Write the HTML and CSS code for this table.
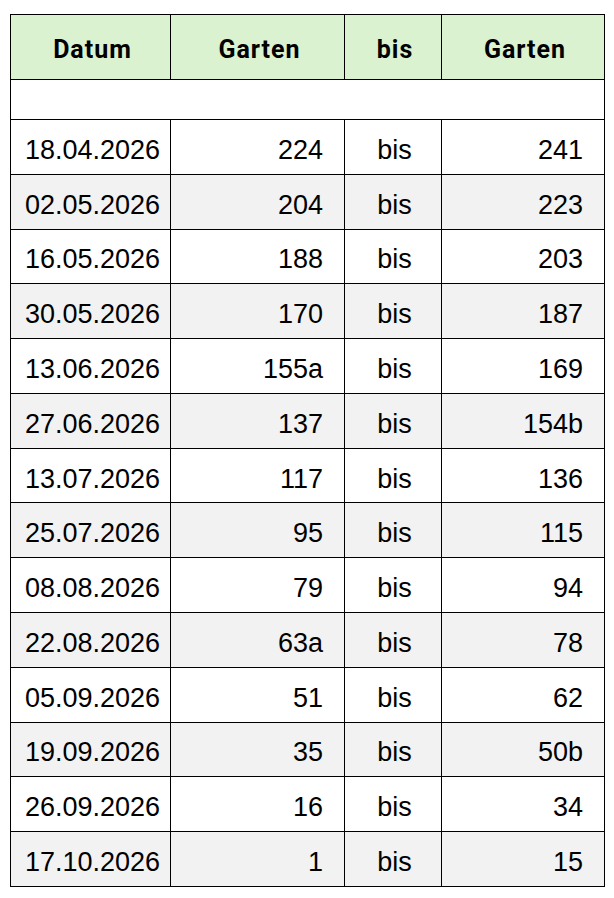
FILE: index.html
```html
<!DOCTYPE html>
<html lang="de">
<head>
<meta charset="utf-8">
<title>Gartenplan</title>
<link rel="stylesheet" href="styles.css">
</head>
<body>
<div class="sheet">
  <div class="row head">
    <div class="c">Datum</div><div class="c">Garten</div><div class="c">bis</div><div class="c">Garten</div>
  </div>
  <div class="row empty">
    <div class="c span"></div>
  </div>
  <div class="row"><div class="c d">18.04.2026</div><div class="c n">224</div><div class="c b">bis</div><div class="c n">241</div></div>
  <div class="row alt"><div class="c d">02.05.2026</div><div class="c n">204</div><div class="c b">bis</div><div class="c n">223</div></div>
  <div class="row"><div class="c d">16.05.2026</div><div class="c n">188</div><div class="c b">bis</div><div class="c n">203</div></div>
  <div class="row alt"><div class="c d">30.05.2026</div><div class="c n">170</div><div class="c b">bis</div><div class="c n">187</div></div>
  <div class="row"><div class="c d">13.06.2026</div><div class="c n">155a</div><div class="c b">bis</div><div class="c n">169</div></div>
  <div class="row alt"><div class="c d">27.06.2026</div><div class="c n">137</div><div class="c b">bis</div><div class="c n">154b</div></div>
  <div class="row"><div class="c d">13.07.2026</div><div class="c n">117</div><div class="c b">bis</div><div class="c n">136</div></div>
  <div class="row alt"><div class="c d">25.07.2026</div><div class="c n">95</div><div class="c b">bis</div><div class="c n">115</div></div>
  <div class="row"><div class="c d">08.08.2026</div><div class="c n">79</div><div class="c b">bis</div><div class="c n">94</div></div>
  <div class="row alt"><div class="c d">22.08.2026</div><div class="c n">63a</div><div class="c b">bis</div><div class="c n">78</div></div>
  <div class="row"><div class="c d">05.09.2026</div><div class="c n">51</div><div class="c b">bis</div><div class="c n">62</div></div>
  <div class="row alt"><div class="c d">19.09.2026</div><div class="c n">35</div><div class="c b">bis</div><div class="c n">50b</div></div>
  <div class="row"><div class="c d">26.09.2026</div><div class="c n">16</div><div class="c b">bis</div><div class="c n">34</div></div>
  <div class="row alt"><div class="c d">17.10.2026</div><div class="c n">1</div><div class="c b">bis</div><div class="c n">15</div></div>
</div>
</body>
</html>
```
FILE: styles.css
```css
html, body {
  margin: 0;
  padding: 0;
  background: #ffffff;
}
body {
  font-family: "Liberation Sans", Arial, sans-serif;
  color: #000;
}
.sheet {
  margin: 14px 0 0 10px;
  width: 595px;
  box-sizing: border-box;
  border-left: 1px solid #000;
  border-top: 1px solid #000;
}
.row {
  display: grid;
  grid-template-columns: 160px 174px 97px 163px;
  height: 54.79px;
  box-sizing: border-box;
}
.row.alt {
  background: #f2f2f2;
}
.c {
  box-sizing: border-box;
  border-right: 1px solid #000;
  border-bottom: 1px solid #000;
  display: flex;
  align-items: center;
  font-size: 27px;
  line-height: 1;
}
.head {
  height: 65px;
  background: #daf2d0;
}
.head .c {
  justify-content: center;
  font-family: Roboto, "Liberation Sans", sans-serif;
  font-weight: 700;
  font-size: 25px;
  letter-spacing: 1px;
  padding-left: 4px;
  padding-top: 5px;
}
.empty {
  height: 40px;
  grid-template-columns: 594px;
}
.d {
  padding-left: 14px;
  padding-top: 7px;
}
.n {
  justify-content: flex-end;
  padding-right: 21px;
  padding-top: 7px;
}
.b {
  justify-content: center;
  padding-left: 3px;
  padding-top: 7px;
}
```
